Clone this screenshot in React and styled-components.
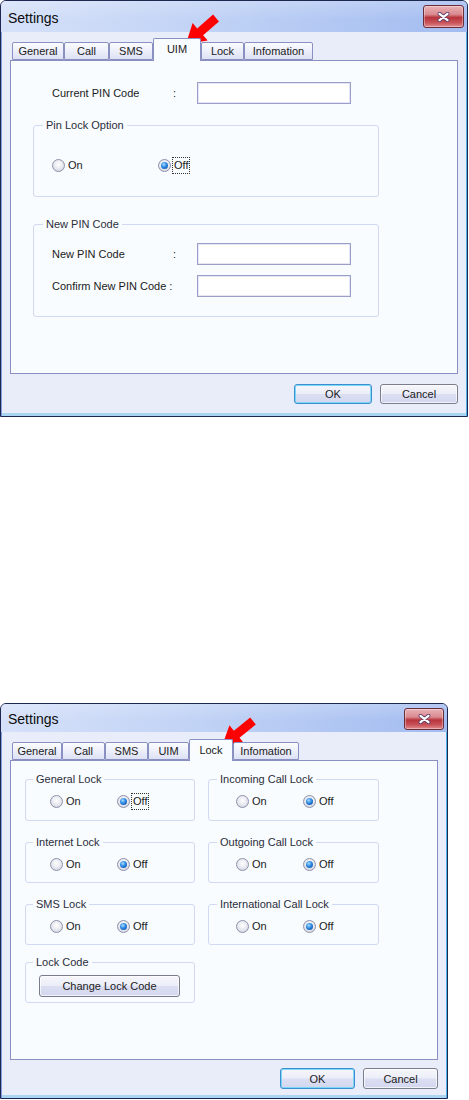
import React from 'react';
import styled, { createGlobalStyle } from 'styled-components';

// global reset
const GlobalStyle = createGlobalStyle`
  html, body { margin: 0; padding: 0; background: #fff; }
  body {
    font-family: "Liberation Sans", Arial, sans-serif;
    font-size: 11px;
    color: #1b1b1b;
  }
`;

const Page = styled.div`
  width: 469px;
  height: 1100px;
  display: flex;
  flex-direction: column;
`;

// window frame
const Window = styled.div`
  position: relative;
  box-sizing: border-box;
  width: ${p => p.w}px;
  height: ${p => p.h}px;
  margin-top: ${p => p.top || 0}px;
  border: 1px solid #1d2850;
  border-radius: 6px 6px 0 0;
  background: #e9edf9;
  display: flex;
  flex-direction: column;
  box-shadow: inset 1px 0 0 #7f9be0, inset -1px 0 0 #4fb0e8, inset 0 -3px 0 #a9d4f2;
`;
const TitleBar = styled.div`
  height: ${p => p.h}px;
  flex: none;
  display: flex;
  justify-content: space-between;
  border-radius: 5px 5px 0 0;
  padding: 0 3px 0 7px;
  background:
    linear-gradient(to bottom, rgba(255,255,255,0.2), rgba(255,255,255,0) 60%),
    linear-gradient(to right, #d6e1f9 0%, #c0d2f5 45%, #a3bcf0 100%);
`;
const Title = styled.div`
  align-self: center;
  font-size: 14px;
  color: #0c0c0c;
  margin-top: 2px;
`;
const CloseButton = styled.div`
  box-sizing: border-box;
  margin-top: 4px;
  width: ${p => p.w}px;
  height: ${p => p.h}px;
  border: 1px solid #6b2c3c;
  border-radius: 3px;
  background: linear-gradient(to bottom, #e9b3b6 0%, #d98a8f 40%, #b8343c 55%, #c9545a 80%, #e08d90 100%);
  box-shadow: inset 0 0 0 1px rgba(255,255,255,0.35);
  display: flex;
  align-items: center;
  justify-content: center;
`;

const Client = styled.div`
  flex: 1;
  display: flex;
  flex-direction: column;
  padding: ${p => p.pt}px 9px 0 9px;
`;

// tabs
const TabStrip = styled.div`
  display: flex;
  align-items: flex-end;
  height: ${p => p.h}px;
  padding-left: 2px;
  margin-bottom: -1px;
  position: relative;
  z-index: 1;
`;
const Tab = styled.div`
  box-sizing: border-box;
  width: ${p => p.w}px;
  height: ${p => (p.active ? '100%' : '18px')};
  margin-bottom: ${p => (p.active ? 0 : 1)}px;
  border: 1px solid #8a90c2;
  border-bottom: ${p => (p.active ? 'none' : '1px solid #8a90c2')};
  border-radius: 2px 2px 0 0;
  background: ${p => (p.active
    ? '#f8fcff'
    : 'linear-gradient(to bottom, #fbfcff 0%, #eef0fb 45%, #dde1f4 100%)')};
  display: flex;
  align-items: ${p => (p.active ? 'flex-start' : 'center')};
  padding-top: ${p => (p.active ? 4 : 0)}px;
  justify-content: center;
  color: #1b1b1b;
`;

const Panel = styled.div`
  box-sizing: border-box;
  height: ${p => p.h}px;
  flex: none;
  border: 1px solid #898fc0;
  background: #f8fcff;
`;

// groups
const Group = styled.div`
  box-sizing: border-box;
  width: ${p => p.w}px;
  height: ${p => p.h}px;
  margin: ${p => p.m || '0'};
  border: 1px solid #d2d9f2;
  border-radius: 3px;
  padding-left: ${p => p.pl || 0}px;
`;
const Legend = styled.div`
  width: fit-content;
  height: 13px;
  line-height: 13px;
  margin: -7px 0 0 ${p => p.ml || 9}px;
  padding: 0 3px;
  background: #f8fcff;
  color: #2b2d3a;
  position: relative;
  left: ${p => -(p.pl || 0)}px;
`;

const RadioRow = styled.div`
  display: flex;
  align-items: center;
  margin-top: ${p => p.mt}px;
`;
const RadioItem = styled.label`
  display: flex;
  align-items: center;
  width: ${p => p.w}px;
  height: 13px;
`;
const RadioDot = styled.span`
  box-sizing: border-box;
  flex: none;
  width: 13px;
  height: 13px;
  border-radius: 50%;
  border: 1px solid #8d92ab;
  background: radial-gradient(circle at 50% 40%, #ffffff 0%, #e6e7ee 55%, #c7c9d6 100%);
  display: flex;
  align-items: center;
  justify-content: center;
  margin-right: 3px;
  &::after {
    content: '';
    display: ${p => (p.checked ? 'block' : 'none')};
    width: 7px;
    height: 7px;
    border-radius: 50%;
    background: radial-gradient(circle at 40% 35%, #a6dcff 0%, #2b88e2 45%, #0a3f94 100%);
  }
`;
const RadioText = styled.span`
  line-height: 13px;
  padding: 1px 1px;
  border: 1px dotted ${p => (p.focus ? '#333' : 'transparent')};
  margin-left: -2px;
`;

// form rows
const FieldGrid = styled.div`
  display: grid;
  grid-template-columns: 121px 24px 154px;
  row-gap: ${p => p.gap || 0}px;
  align-items: center;
  margin: ${p => p.m};
`;
const FieldLabel = styled.span`
  grid-column: ${p => (p.wide ? 'span 2' : 'auto')};
  color: #1b1b1b;
`;
const Colon = styled.span`
  color: #1b1b1b;
`;
const TextBox = styled.div`
  box-sizing: border-box;
  height: 22px;
  border: 1px solid #9a9ec8;
  box-shadow: inset 0 0 0 1px #e4e6f3;
  background: #fff;
`;

// buttons
const ButtonRow = styled.div`
  display: flex;
  justify-content: flex-end;
  gap: 8px;
  margin-top: ${p => p.mt}px;
`;
const Button = styled.div`
  box-sizing: border-box;
  width: ${p => p.w}px;
  height: ${p => p.h}px;
  border: 1px solid ${p => (p.primary ? '#3a8fd0' : '#7b7d8c')};
  border-radius: 3px;
  background: linear-gradient(to bottom, #f6f6fb 0%, #eceef8 48%, #dcdff2 52%, #d3d7ef 100%);
  box-shadow: inset 0 0 0 1px ${p => (p.primary ? '#7fd6f6' : 'rgba(255,255,255,0.7)')};
  display: flex;
  align-items: center;
  justify-content: center;
  color: #1b1b1b;
`;
const LockButton = styled(Button)`
  margin: 6px 0 0 13px;
`;

const LockGrid = styled.div`
  display: grid;
  grid-template-columns: 170px 171px;
  column-gap: 13px;
  row-gap: 21px;
  padding: 18px 0 0 14px;
`;

const ArrowSvg = styled.svg`
  position: absolute;
  left: ${p => p.x}px;
  top: ${p => p.y}px;
  overflow: visible;
`;

const CloseGlyph = () => (
  <svg width="13" height="10" viewBox="0 0 13 10">
    <path d="M2.5 1.8 L10.5 8.2 M10.5 1.8 L2.5 8.2" stroke="#5a3a6a" strokeWidth="3.8" strokeLinecap="round" />
    <path d="M2.5 1.8 L10.5 8.2 M10.5 1.8 L2.5 8.2" stroke="#fff" strokeWidth="2.2" strokeLinecap="round" />
  </svg>
);

const RedArrow = ({ x, y, angle }) => (
  <ArrowSvg x={x} y={y} width="50" height="40">
    <g transform={`translate(42 7) rotate(${angle})`}>
      <polygon points="0,-4.5 21,-4.5 21,-11.5 40,0 21,11.5 21,4.5 0,4.5" fill="#f00" />
    </g>
  </ArrowSvg>
);

const Radio = ({ label, checked, focus, w }) => (
  <RadioItem w={w}>
    <RadioDot checked={checked} />
    <RadioText focus={focus}>{label}</RadioText>
  </RadioItem>
);

const OnOff = ({ mt, w, focus }) => (
  <RadioRow mt={mt}>
    <Radio label="On" w={w} />
    <Radio label="Off" w={w} checked focus={focus} />
  </RadioRow>
);

const uimTabs = [
  ['General', 52], ['Call', 45], ['SMS', 44], ['UIM', 48], ['Lock', 43], ['Infomation', 69],
];
const lockTabs = [
  ['General', 50], ['Call', 43], ['SMS', 43], ['UIM', 41], ['Lock', 44], ['Infomation', 66],
];

const Dialog = ({ w, h, top, titleH, closeW, closeH, pt, tabH, tabs, active, panelH, btnGap, btnW, btnH, children, arrow }) => (
  <Window w={w} h={h} top={top}>
    <TitleBar h={titleH}>
      <Title>Settings</Title>
      <CloseButton w={closeW} h={closeH}><CloseGlyph /></CloseButton>
    </TitleBar>
    <Client pt={pt}>
      <TabStrip h={tabH}>
        {tabs.map(([name, tw]) => (
          <Tab key={name} w={tw} active={name === active}>{name}</Tab>
        ))}
      </TabStrip>
      <Panel h={panelH}>{children}</Panel>
      <ButtonRow mt={btnGap}>
        <Button primary w={btnW} h={btnH}>OK</Button>
        <Button w={btnW} h={btnH}>Cancel</Button>
      </ButtonRow>
    </Client>
    {arrow}
  </Window>
);

const lockGroups = [
  ['General Lock', 'Incoming Call Lock', 42],
  ['Internet Lock', 'Outgoing Call Lock', 41],
  ['SMS Lock', 'International Call Lock', 41],
];

const App = () => (
  <Page>
    <GlobalStyle />
    <Dialog
      w={468} h={417} titleH={31} closeW={41} closeH={23} pt={6} tabH={23}
      tabs={uimTabs} active="UIM" panelH={314} btnGap={10} btnW={78} btnH={20}
      arrow={<RedArrow x={173} y={10} angle={139} />}
    >
      <FieldGrid m="21px 0 0 41px">
        <FieldLabel>Current PIN Code</FieldLabel>
        <Colon>:</Colon>
        <TextBox />
      </FieldGrid>
      <Group w={346} h={72} m="21px 0 0 22px" pl={18}>
        <Legend pl={18} ml={9}>Pin Lock Option</Legend>
        <OnOff mt={27} w={106} focus />
      </Group>
      <Group w={346} h={93} m="27px 0 0 22px" pl={18}>
        <Legend pl={18} ml={9}>New PIN Code</Legend>
        <FieldGrid m="12px 0 0 0" gap={10}>
          <FieldLabel>New PIN Code</FieldLabel>
          <Colon>:</Colon>
          <TextBox />
          <FieldLabel wide>Confirm New PIN Code :</FieldLabel>
          <TextBox />
        </FieldGrid>
      </Group>
    </Dialog>

    <Dialog
      w={448} h={396} top={286} titleH={28} closeW={40} closeH={22} pt={7} tabH={22}
      tabs={lockTabs} active="Lock" panelH={300} btnGap={8} btnW={75} btnH={21}
      arrow={<RedArrow x={210} y={10} angle={141} />}
    >
      <LockGrid>
        {lockGroups.map(([left, right, gh], i) => (
          <React.Fragment key={left}>
            <Group w={170} h={gh} pl={24}>
              <Legend pl={24} ml={7}>{left}</Legend>
              <OnOff mt={9} w={67} focus={i === 0} />
            </Group>
            <Group w={171} h={gh} pl={27}>
              <Legend pl={27} ml={8}>{right}</Legend>
              <OnOff mt={9} w={67} />
            </Group>
          </React.Fragment>
        ))}
        <Group w={170} h={41} m="-4px 0 0 0">
          <Legend ml={7}>Lock Code</Legend>
          <LockButton w={141} h={22}>Change Lock Code</LockButton>
        </Group>
      </LockGrid>
    </Dialog>
  </Page>
);

export default App;
